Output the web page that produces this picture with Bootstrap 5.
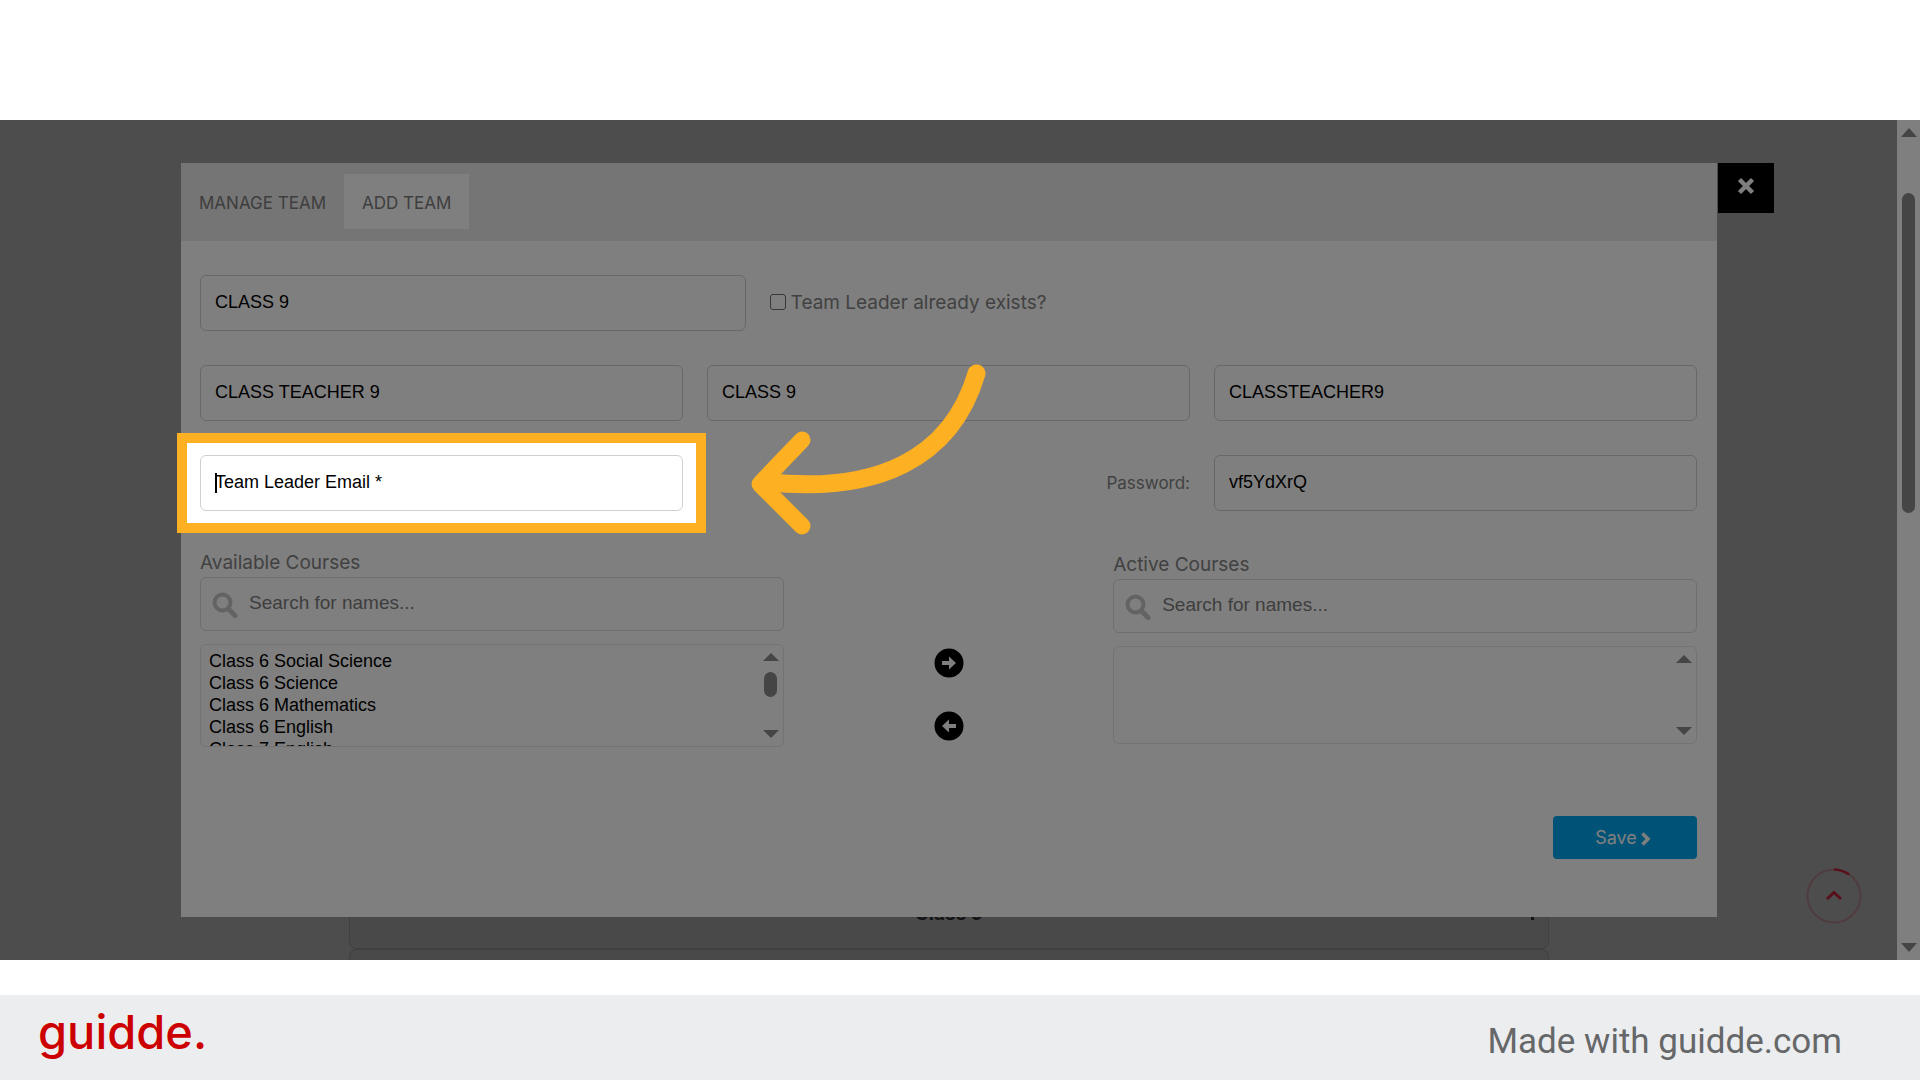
<!DOCTYPE html>
<html lang="en">
<head>
<meta charset="utf-8">
<meta name="viewport" content="width=device-width, initial-scale=1">
<title>Add team</title>
<link rel="stylesheet" href="https://cdn.jsdelivr.net/npm/bootstrap@5.3.0/dist/css/bootstrap.min.css">
<style>
  body { background: #fff; font-family: Inter, "Noto Sans", sans-serif; font-size: 19px; line-height: 28px; color: #838383; }
  .top-space { height: 120px; }
  .stage { background: #9a9a9a; flex: 1 1 auto; }
  .stage-main { padding: 43px 180px 0 181px; min-width: 0; }

  /* dialog */
  .team-dialog { background: #fff; z-index: 2; }
  .tab-strip { background: #eaeaea; padding: 11px 0 12px; font-size: 17px; }
  .tab-strip .nav-link { color: #7c7c7c; padding: 15px 18px 12px; border-radius: 0; }
  .tab-strip .nav-link.active { background: #fff; color: #7c7c7c; }
  .close-box { left: 100%; top: 0; margin-left: 1px; width: 56px; height: 50px; background: #000; border: 0; z-index: 3; padding: 0 0 6px; }
  .team-form { padding: 34px 20px 58px 19px; }
  .field-row { margin-bottom: 34px; }
  .field-box { height: 56px; padding: 0 14px 1px; border: 1px solid #d0d0d0; border-radius: 6px; color: #000; background: #fff; font: 18px "Liberation Sans", sans-serif; }
  .field-box:focus { box-shadow: none; border-color: #d0d0d0; }
  .email-box::placeholder { color: #000; opacity: 1; }
  .team-col { flex: 0 0 auto; width: 37.45%; }
  .exist-check { width: 16px; height: 16px; margin: 0 5px 2px 0; border: 1px solid #6e6e6e; border-radius: 3px !important; background: #fff; }
  .pw-label { font-size: 17px; }

  /* spotlight over the e-mail field */
  .spot { left: -13px; right: -13px; top: -12px; bottom: -12px; box-shadow: 0 0 0 10px #fdb022, 0 0 0 4000px rgba(0,0,0,.5); z-index: 5; pointer-events: none; }
  .text-cursor { left: 15px; top: 18px; width: 2px; height: 20px; background: #000; }
  .hand-arrow { left: 100%; top: -92px; margin-left: 68px; width: 235px; height: 172px; z-index: 7; pointer-events: none; }

  /* course lists */
  .course-area { padding-top: 4px; }
  .course-col { width: 39%; }
  .course-col.lower { padding-top: 2px; }
  .search-box { height: 54px; padding-left: 48px; padding-bottom: 3px; font-size: 19px; border-color: #dcdcdc; }
  .search-box::placeholder { color: #7d7d7d; opacity: 1; }
  .search-icon { left: 11px; top: 14px; width: 28px; height: 28px; }
  .list-wrap { margin-top: 13px; }
  .course-list { height: 103px; padding: 6px 8px 0; border: 1px solid #e6e6e6; border-radius: 6px; color: #000; font: 18px/22px "Liberation Sans", sans-serif; background: #fff; overflow: hidden; }
  .course-list.short { height: 98px; }
  .course-list option { padding: 0; height: 22px; line-height: 22px; min-height: 22px; }
  .list-scroll { right: 5px; top: 9px; bottom: 9px; width: 16px; }
  .arrow-up, .arrow-down { width: 0; height: 0; border: 8px solid transparent; }
  .arrow-up { border-top: 0; border-bottom-color: #8b8b8b; }
  .arrow-down { border-bottom: 0; border-top-color: #8b8b8b; }
  .list-thumb { width: 13px; height: 25px; border-radius: 7px; background: #8b8b8b; margin-top: 11px; }
  .move-col { padding-top: 99px; gap: 33px; }
  .move-btn { width: 30px; height: 30px; border: 0; padding: 0; background: none; }
  .save-btn { width: 144px; height: 43px; background: #00a6ee; color: #fff; border: 0; border-radius: 4px; padding: 0 4px 0 0; font-size: 18px; margin-top: 69px; }
  .save-btn:hover { background: #0094d6; color: #fff; }

  /* page behind the dialog */
  .under-list { margin: -58px 168px 0; }
  .under-card { background: #939393; border: 1px solid #808080; border-radius: 7px; height: 90px; font-size: 19px; font-weight: 700; color: #262626; padding: 40px 14px 0; }
  .under-card.next { height: 11px; padding: 0; border-bottom: 0; border-radius: 7px 7px 0 0; }
  .under-caret { right: 14px; top: 50px; width: 3px; height: 10px; background: #262626; }
  .to-top { right: 58px; bottom: 36px; width: 56px; height: 56px; border: 0; background: none; padding: 0; }
  .page-scroll { width: 23px; background: #fff; padding: 8px 0; }
  .page-thumb { width: 13px; height: 320px; border-radius: 7px; background: #8b8b8b; margin-top: 56px; }
  .page-scroll .arrow-up { border-bottom-width: 9px; }
  .page-scroll .arrow-down { border-top-width: 9px; }

  .brand-bar { background: #ecedef; height: 85px; margin-top: 35px; padding: 0 78px 0 38px; }
  .brand-name { color: #c00; font: 500 47px/60px Inter, sans-serif; padding-bottom: 11px; }
  .brand-note { color: #666769; font: 35px/44px Roboto, sans-serif; padding-top: 8px; }
</style>
</head>
<body>
<div class="d-flex flex-column min-vh-100">
  <div class="top-space"></div>

  <div class="stage d-flex position-relative overflow-hidden">
    <main class="stage-main flex-grow-1">
      <section class="team-dialog position-relative" aria-label="Team">
        <button type="button" class="close-box position-absolute" aria-label="Close">
          <svg width="18" height="18" viewBox="0 0 18 18"><path d="M2.500 2.500L15.500 15.500M15.500 2.500L2.500 15.500" stroke="#fff" stroke-width="4.500"/></svg>
        </button>
        <nav class="tab-strip nav">
          <a class="nav-link" href="#">MANAGE TEAM</a>
          <a class="nav-link active" href="#" aria-current="page">ADD TEAM</a>
        </nav>

        <form class="team-form">
          <div class="row field-row align-items-center">
            <div class="team-col"><input class="form-control field-box" aria-label="Team name" value="CLASS 9"></div>
            <div class="col d-flex align-items-center">
              <input type="checkbox" class="form-check-input exist-check" id="leaderExists">
              <label for="leaderExists">Team Leader already exists?</label>
            </div>
          </div>

          <div class="row field-row">
            <div class="col-4"><input class="form-control field-box" aria-label="Team leader first name" value="CLASS TEACHER 9"></div>
            <div class="col-4"><input class="form-control field-box" aria-label="Team leader last name" value="CLASS 9"></div>
            <div class="col-4"><input class="form-control field-box" aria-label="Team leader user name" value="CLASSTEACHER9"></div>
          </div>

          <div class="row field-row align-items-center">
            <div class="col-4">
              <div class="position-relative">
                <input type="email" class="form-control field-box email-box" aria-label="Team Leader Email" placeholder="Team Leader Email *">
                <span class="text-cursor position-absolute"></span>
                <span class="spot position-absolute"></span>
                <svg class="hand-arrow position-absolute" viewBox="0 0 235 172" fill="none" stroke="#fdb022" stroke-linecap="round" stroke-linejoin="round">
                  <path d="M225.500 10.500C200 97 124 131 15 119" stroke-width="18"/>
                  <path d="M51 77L9 121L51 163" stroke-width="17"/>
                </svg>
              </div>
            </div>
            <div class="col-4 text-end"><label class="pw-label" for="pw">Password:</label></div>
            <div class="col-4"><input id="pw" class="form-control field-box" value="vf5YdXrQ"></div>
          </div>

          <div class="course-area d-flex justify-content-between">
            <div class="course-col">
              <label for="searchAvail">Available Courses</label>
              <div class="position-relative">
                <input type="search" id="searchAvail" class="form-control field-box search-box" placeholder="Search for names...">
                <svg class="search-icon position-absolute" viewBox="0 0 28 28" fill="none" stroke="#c6c6c6"><circle cx="11.500" cy="11.500" r="8" stroke-width="4"/><path d="M17.500 18L24 24.500" stroke-width="5" stroke-linecap="round"/></svg>
              </div>
              <div class="list-wrap position-relative">
                <select multiple class="form-select course-list" aria-label="Available courses">
                  <option>Class 6 Social Science</option>
                  <option>Class 6 Science</option>
                  <option>Class 6 Mathematics</option>
                  <option>Class 6 English</option>
                  <option>Class 7 English</option>
                </select>
                <div class="list-scroll position-absolute d-flex flex-column align-items-center" aria-hidden="true">
                  <span class="arrow-up"></span><span class="list-thumb"></span><span class="arrow-down mt-auto"></span>
                </div>
              </div>
            </div>

            <div class="move-col d-flex flex-column align-items-center">
              <button type="button" class="move-btn d-flex" aria-label="Add course"><svg width="30" height="30" viewBox="0 0 30 30"><circle cx="15" cy="15" r="14.500"/><path d="M8 13h7V8.500L22 15L15 21.500V17H8z" fill="#fff"/></svg></button>
              <button type="button" class="move-btn d-flex" aria-label="Remove course"><svg width="30" height="30" viewBox="0 0 30 30"><circle cx="15" cy="15" r="14.500"/><path d="M22 13h-7V8.500L8 15L15 21.500V17H22z" fill="#fff"/></svg></button>
            </div>

            <div class="course-col lower">
              <label for="searchActive">Active Courses</label>
              <div class="position-relative">
                <input type="search" id="searchActive" class="form-control field-box search-box" placeholder="Search for names...">
                <svg class="search-icon position-absolute" viewBox="0 0 28 28" fill="none" stroke="#c6c6c6"><circle cx="11.500" cy="11.500" r="8" stroke-width="4"/><path d="M17.500 18L24 24.500" stroke-width="5" stroke-linecap="round"/></svg>
              </div>
              <div class="list-wrap position-relative">
                <select multiple class="form-select course-list short" aria-label="Active courses"></select>
                <div class="list-scroll position-absolute d-flex flex-column align-items-center" aria-hidden="true">
                  <span class="arrow-up"></span><span class="arrow-down mt-auto"></span>
                </div>
              </div>
            </div>
          </div>

          <div class="d-flex justify-content-end">
            <button type="submit" class="btn save-btn">Save<svg class="ms-1" width="10" height="14" viewBox="0 0 10 14" fill="none" stroke="#fff" stroke-width="3.500"><path d="M1.500 1.500L7 7L1.500 12.500"/></svg></button>
          </div>
        </form>
      </section>

      <div class="under-list">
        <div class="under-card d-flex justify-content-center position-relative">Class 9<span class="under-caret position-absolute"></span></div>
        <div class="under-card next"></div>
      </div>
      <button type="button" class="to-top position-absolute" aria-label="Back to top">
        <svg width="56" height="56" viewBox="0 0 56 56" fill="none" stroke="#b02036"><circle cx="28" cy="28" r="26.500" stroke-width="2" stroke-opacity=".28"/><path d="M28 1.500A26.500 26.500 0 0 1 43 6.500" stroke-width="2.500"/><path d="M21 31L28 24.500L35 31" stroke-width="3"/></svg>
      </button>
    </main>
    <div class="page-scroll d-flex flex-column align-items-center" aria-hidden="true">
      <span class="arrow-up"></span><span class="page-thumb"></span><span class="arrow-down mt-auto"></span>
    </div>
  </div>

  <footer class="brand-bar d-flex align-items-center justify-content-between">
    <span class="brand-name">guidde.</span>
    <span class="brand-note">Made with guidde.com</span>
  </footer>
</div>
<script src="https://cdn.jsdelivr.net/npm/bootstrap@5.3.0/dist/js/bootstrap.bundle.min.js"></script>
</body>
</html>
